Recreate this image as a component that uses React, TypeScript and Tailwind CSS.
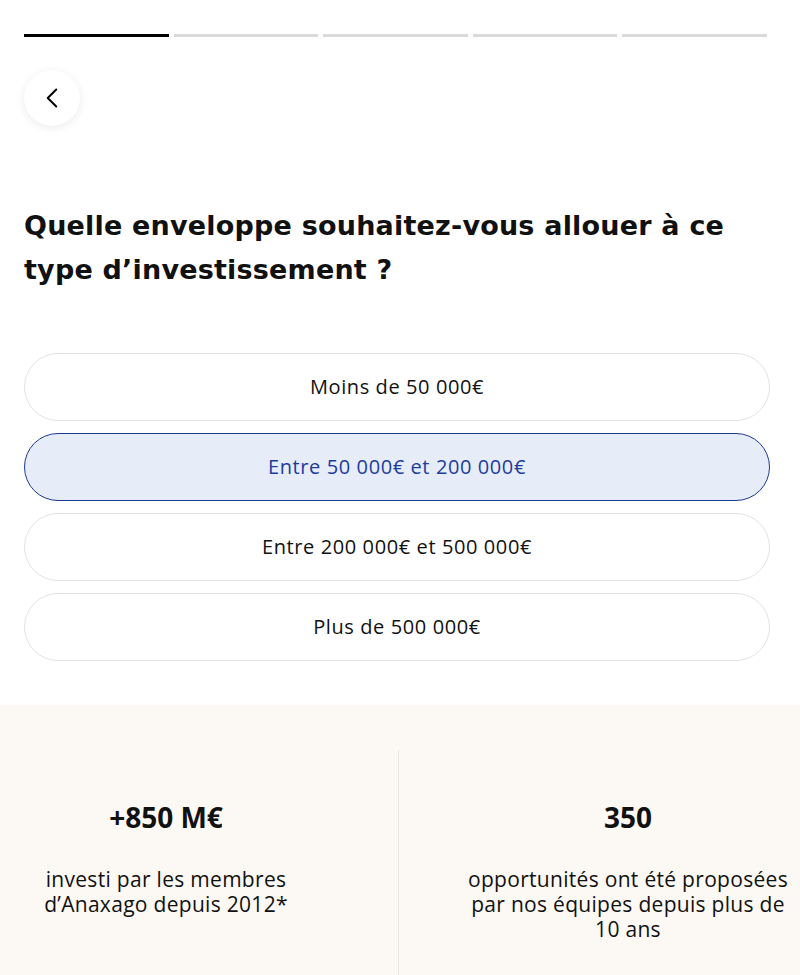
import React, { useState } from 'react';
import { ChevronLeft } from 'lucide-react';

const OPTIONS = [
    'Moins de 50 000€',
    'Entre 50 000€ et 200 000€',
    'Entre 200 000€ et 500 000€',
    'Plus de 500 000€',
];

export default function App() {
    const [selected, setSelected] = useState(1);

    return (
        <div className="min-h-[975px] bg-white text-[#111] overflow-hidden" style={{ fontFamily: '"Open Sans", "Noto Sans", sans-serif' }}>
            {/* progress */}
            <div className="flex gap-[5px] pl-6 pr-[33px] pt-[34px]">
                {[0, 1, 2, 3, 4].map(i => (
                    <div key={i} className={`h-[3px] flex-1 ${i === 0 ? 'bg-black' : 'bg-[#dadada]'}`} />
                ))}
            </div>

            {/* back */}
            <div className="pl-6 pt-[33px]">
                <button className="w-14 h-14 rounded-full bg-white flex items-center justify-center shadow-[0_2px_10px_rgba(0,0,0,0.08)]">
                    <ChevronLeft className="w-[34px] h-[34px] text-black" strokeWidth={1.4} />
                </button>
            </div>

            {/* question */}
            <h1
                className="pl-6 pr-8 mt-[78px] text-[27px] leading-[44px] font-bold tracking-[0.2px] text-[#111]"
                style={{ fontFamily: '"DejaVu Sans", "Noto Sans", sans-serif' }}
            >
                Quelle enveloppe souhaitez-vous allouer à ce type d’investissement ?
            </h1>

            {/* options */}
            <div className="flex flex-col gap-3 pl-6 pr-[30px] mt-[61px]">
                {OPTIONS.map((opt, i) => (
                    <button
                        key={opt}
                        onClick={() => setSelected(i)}
                        className={`h-[68px] rounded-full text-[20px] tracking-[0.6px] flex items-center justify-center ${i === selected
                            ? 'bg-[#e6edf8] border border-[#1b3a92] text-[#1d3c9c]'
                            : 'bg-white border-[1.5px] border-[#e2e2e2] text-[#111]'
                            }`}
                    >
                        {opt}
                    </button>
                ))}
            </div>

            {/* stats */}
            <div className="mt-[44px] bg-[#fcf9f5] flex pt-[45px] h-[271px]">
                <div className="w-[332px] shrink-0 text-center pt-[51px]">
                    <div className="text-[28px] font-bold leading-8">+850 M€</div>
                    <p className="mt-[34px] text-[21px] leading-[25px] tracking-[0.3px]">
                        investi par les membres<br />d’Anaxago depuis 2012*
                    </p>
                </div>
                <div className="w-px bg-[#ebe6e0] ml-[66px] mr-[67px] shrink-0" />
                <div className="w-[324px] shrink-0 text-center pt-[51px]">
                    <div className="text-[28px] font-bold leading-8">350</div>
                    <p className="mt-[34px] text-[21px] leading-[25px] tracking-[0.3px]">
                        opportunités ont été proposées par nos équipes depuis plus de 10 ans
                    </p>
                </div>
            </div>
        </div>
    );
}
